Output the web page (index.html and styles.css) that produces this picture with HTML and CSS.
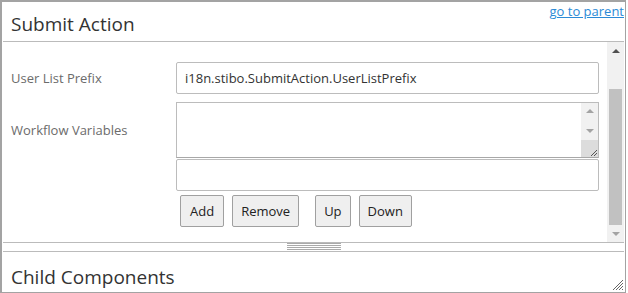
FILE: index.html
```html
<!DOCTYPE html>
<html lang="en">
<head>
  <meta charset="UTF-8" />
  <title>Submit Action</title>
  <link rel="stylesheet" href="styles.css">
</head>
<body>
  <div class="dialog">
    <div class="dialog-header">
      <h1 class="section-title">Submit Action</h1>
      <a class="parent-link" href="#">go to parent</a>
    </div>

    <div class="dialog-body">
      <div class="form">
        <div class="form-row">
          <label class="form-label" for="user-list-prefix">User List Prefix</label>
          <input class="text-field" id="user-list-prefix" type="text" value="i18n.stibo.SubmitAction.UserListPrefix">
        </div>

        <div class="form-row">
          <label class="form-label label-mid">Workflow Variables</label>
          <div class="field-stack">
            <div class="text-area">
              <textarea></textarea>
              <div class="mini-scroll">
                <span class="arrow arrow-up light"></span>
                <span class="mini-track"></span>
                <span class="arrow arrow-down light"></span>
                <span class="mini-corner">
                  <svg width="9" height="9" viewBox="0 0 9 9"><path d="M8 2 L2 8 M8 5 L5 8" stroke="#555" stroke-width="1"/></svg>
                </span>
              </div>
            </div>
            <input class="text-field" type="text">
            <div class="button-row">
              <button class="btn btn-add">Add</button>
              <button class="btn">Remove</button>
              <button class="btn btn-gap">Up</button>
              <button class="btn">Down</button>
            </div>
          </div>
        </div>
      </div>

      <div class="scrollbar">
        <span class="scroll-btn"><span class="arrow arrow-up"></span></span>
        <span class="scroll-track"><span class="scroll-thumb"></span></span>
        <span class="scroll-btn"><span class="arrow arrow-down light"></span></span>
      </div>
    </div>

    <div class="splitter"><span class="splitter-grip"></span></div>

    <div class="child-section">
      <h2 class="section-title">Child Components</h2>
    </div>

    <svg class="resize-grip" width="12" height="12" viewBox="0 0 12 12">
      <path d="M11 1 L1 11 M11 4 L4 11 M11 7 L7 11 M11 10 L10 11" stroke="#666" stroke-width="1"/>
    </svg>
  </div>
</body>
</html>
```

FILE: styles.css
```css
body { margin: 0; font-family: 'Open Sans', sans-serif; font-size: 13px; color: #333; background: #fff; }
.dialog { position: relative; box-sizing: border-box; width: 626px; height: 293px; border-style: solid; border-color: #a3a3a3; border-width: 2px 1px 1px 2px; display: flex; flex-direction: column; }
.dialog-header { display: flex; justify-content: space-between; align-items: flex-start; height: 39px; margin: 0 1px; border-bottom: 1px solid #bbb; padding-left: 8px; }
.section-title { margin: 0; font-size: 19px; font-weight: 400; color: #333; line-height: 26px; }
.dialog-header .section-title { padding-top: 9px; }
.parent-link { color: #2b8ad6; text-decoration: underline; font-size: 13px; line-height: 16px; padding-top: 1px; }

.dialog-body { display: flex; height: 200px; margin: 0 1px; }
.form { flex: 1; padding: 20px 8px 0 8px; display: flex; flex-direction: column; gap: 8px; }
.form-row { display: flex; align-items: center; }
.form-row:nth-child(2) { align-items: flex-start; }
.form-label { width: 165px; flex-shrink: 0; color: #6b6b6b; }
.label-mid { padding-top: 19px; }
.field-stack { flex: 1; display: flex; flex-direction: column; }
.text-field { box-sizing: border-box; width: 100%; height: 32px; border: 1px solid #bcbcbc; border-radius: 2px; padding: 0 8px; font-family: inherit; font-size: 13px; color: #333; }

.text-area { box-sizing: border-box; height: 56px; display: flex; border: 1px solid #bcbcbc; border-bottom-color: #a8a8a8; margin-bottom: 1px; }
.text-area textarea { flex: 1; border: none; resize: none; outline: none; font-family: inherit; }
.mini-scroll { width: 17px; display: flex; flex-direction: column; background: #f1f1f1; }
.mini-scroll .arrow { margin: 6px auto 7px; }
.mini-track { flex: 1; }
.mini-corner { height: 17px; background: #dcdcdc; display: flex; align-items: flex-end; justify-content: flex-end; }

.button-row { display: flex; gap: 8px; margin: 4px 0 0 4px; }
.btn { height: 32px; padding: 0 8px; background: #efefef; border: 1px solid #a0a0a0; border-radius: 2px; font-family: inherit; font-size: 13px; color: #222; }
.btn-add { padding: 0 9px; }
.btn-gap { margin-left: 8px; }

.arrow { display: block; width: 0; height: 0; border-left: 4px solid transparent; border-right: 4px solid transparent; }
.arrow-up { border-bottom: 4px solid #505050; }
.arrow-down { border-top: 4px solid #505050; }
.arrow-up.light { border-bottom-color: #a3a3a3; }
.arrow-down.light { border-top-color: #a3a3a3; }

.scrollbar { width: 17px; display: flex; flex-direction: column; background: #f1f1f1; }
.scroll-btn { height: 17px; display: flex; align-items: center; justify-content: center; }
.scroll-track { flex: 1; display: flex; flex-direction: column; justify-content: flex-end; padding: 0 2px; }
.scroll-thumb { height: 136px; background: #c1c1c1; }

.splitter { height: 8px; margin: 0 1px; border-top: 1px solid #bbb; border-bottom: 1px solid #bbb; display: flex; justify-content: center; align-items: flex-start; }
.splitter-grip { width: 54px; height: 7px; background: repeating-linear-gradient(to bottom, #aaa 0, #aaa 1px, transparent 1px, transparent 2px); }
.child-section { padding: 12px 0 0 9px; }

.resize-grip { position: absolute; right: 1px; bottom: 1px; }
```
